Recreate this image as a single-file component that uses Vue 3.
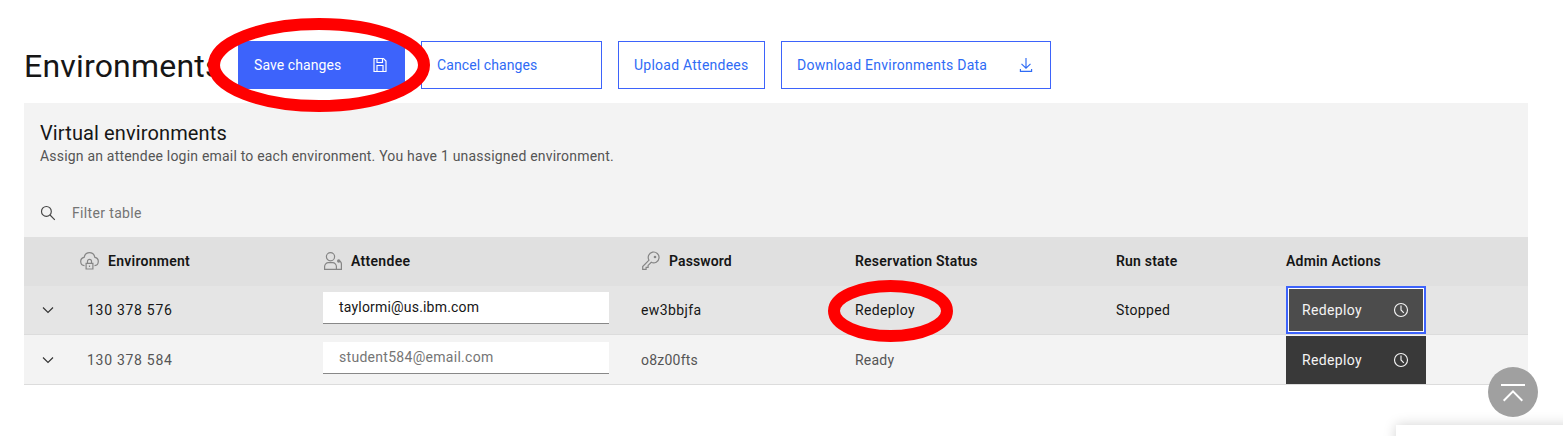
<script setup>
const rows = [
  { id: '130 378 576', email: 'taylormi@us.ibm.com', filled: true, password: 'ew3bbjfa', status: 'Redeploy', run: 'Stopped', selected: true },
  { id: '130 378 584', email: 'student584@email.com', filled: false, password: 'o8z00fts', status: 'Ready', run: '', selected: false },
]
</script>

<template>
  <div class="page">
    <header class="toolbar">
      <h1>Environments</h1>
      <div class="actions">
        <button class="btn primary">
          <span class="t-save">Save changes</span>
          <svg class="ic" width="16" height="16" viewBox="0 0 16 16"><path d="M2 1.5h9.5l2.500 2.500v10.500H2zM5 1.500v4h5.500v-4M5 14.500V8.500h6v6" /></svg>
        </button>
        <button class="btn cancel"><span class="t-cancel">Cancel changes</span></button>
        <button class="btn upload"><span class="t-upload">Upload Attendees</span></button>
        <button class="btn download">
          <span class="t-download">Download Environments Data</span>
          <svg class="ic" width="16" height="16" viewBox="0 0 16 16"><path d="M8 1v10M3.500 6.800L8 11.200l4.500-4.400M2.400 12v2.400h11.200V12" /></svg>
        </button>
      </div>
    </header>

    <main class="panel">
      <section class="intro">
        <h2>Virtual environments</h2>
        <p>Assign an attendee login email to each environment. You have 1 unassigned environment.</p>
      </section>
      <div class="filter">
        <svg class="ic" width="16" height="16" viewBox="0 0 16 16"><circle cx="6.400" cy="6.400" r="4.900" /><path d="M10 10l4.800 4.800" /></svg>
        <span>Filter table</span>
      </div>

      <div class="row head">
        <div></div>
        <div class="th">
          <svg class="ic" width="20" height="20" viewBox="0.500 0 20 20">
            <path d="M5 14.700A4.200 4.200 0 0 1 4.600 6.400C5.200 3.500 7.300 1.600 10 1.600S14.800 3.500 15.400 6.400A4.200 4.200 0 0 1 15 14.700" />
            <path d="M6.600 12.400h6.800v5.600H6.600zM8 12.400V10.300a2 2 0 0 1 4 0v2.100M10 14.600v1.400" />
          </svg>
          <span class="t-env">Environment</span>
        </div>
        <div class="th">
          <svg class="ic" width="20" height="20" viewBox="0 0 20 20">
            <circle cx="7.500" cy="5.700" r="4.100" />
            <path d="M1.600 18.300v-2.800a3.800 3.800 0 0 1 3.800-3.800h4.200a3.800 3.800 0 0 1 3.800 3.800v2.800zM13.400 18.300h5v-5.500a3.200 3.200 0 0 0-2.600-3" />
            <circle class="dot" cx="15.700" cy="10" r="1.700" />
          </svg>
          <span class="t-att">Attendee</span>
        </div>
        <div class="th">
          <svg class="ic" width="20" height="20" viewBox="0 0 20 20">
            <path d="M8 9.200L1.700 15.500v2.900h3.400v-2h2v-2l3.200-3.100a5.400 5.400 0 1 0-2.300-2.100z" />
            <circle class="dot" cx="14" cy="6" r="1.300" />
          </svg>
          <span class="t-pass">Password</span>
        </div>
        <div class="th t-res">Reservation Status</div>
        <div class="th t-run">Run state</div>
        <div class="th t-admin">Admin Actions</div>
      </div>

      <div v-for="row in rows" :key="row.id" class="row body" :class="{ selected: row.selected }">
        <div class="chev">
          <svg class="ic" width="16" height="16" viewBox="0 0 16 16"><path d="M3 5.500l5 5 5-5" /></svg>
        </div>
        <div class="id">{{ row.id }}</div>
        <div class="field" :class="{ filled: row.filled }">{{ row.email }}</div>
        <div class="pw">{{ row.password }}</div>
        <div class="status">{{ row.status }}</div>
        <div class="state">{{ row.run }}</div>
        <button class="redeploy">
          <span>Redeploy</span>
          <svg class="ic" width="16" height="16" viewBox="0 0 16 16"><circle cx="8" cy="8" r="6.500" /><path d="M8 3.500V8l2.800 2.900" /></svg>
        </button>
      </div>
    </main>

    <div class="drawer"></div>
    <button class="top" aria-label="Back to top">
      <svg width="50" height="50" viewBox="0 0 50 50"><path d="M13 18h24M15.700 33.700L25 24.400l9.300 9.300" /></svg>
    </button>
    <svg class="marks" width="1563" height="436" viewBox="0 0 1563 436">
      <ellipse cx="319" cy="65" rx="105" ry="41" />
      <ellipse cx="890.500" cy="311" rx="56.500" ry="25" />
    </svg>
  </div>
</template>

<style scoped>
.page {
  position: relative;
  box-sizing: border-box;
  width: 1563px;
  height: 436px;
  padding: 41px 35px 0 24px;
  overflow: hidden;
  background: #fff;
  color: #161616;
  font: 400 14px/18px Roboto, "Liberation Sans", sans-serif;
  letter-spacing: 0.2px;
}
h1, h2, p { margin: 0; font-weight: 400; }
button {
  box-sizing: border-box;
  margin: 0;
  border: 0;
  border-radius: 0;
  font: inherit;
  text-align: left;
  white-space: nowrap;
}
.ic { display: block; flex: none; fill: none; stroke: currentColor; stroke-width: 1.150; }
.dot { fill: currentColor; stroke: none; }

.toolbar { display: flex; height: 62px; }
h1 { width: 214px; font-size: 32px; line-height: 50px; letter-spacing: 0.200px; white-space: nowrap; }
.actions { display: flex; gap: 16px; }
.btn {
  display: flex;
  align-items: center;
  justify-content: space-between;
  height: 48px;
  padding: 0 16px 0 15px;
  border: 1px solid #3d63fb;
  background: #fff;
  color: #2f6bf5;
}
.primary { width: 167px; background: #3d63fb; color: #fff; }
.cancel { width: 181px; }
.upload { width: 147px; }
.download { width: 270px; }
.t-save { letter-spacing: 0.080px; }
.t-cancel { letter-spacing: 0.100px; }
.t-upload { letter-spacing: 0.240px; }
.t-download { letter-spacing: 0.250px; }

.intro { box-sizing: border-box; height: 86px; padding: 17px 16px 0; background: #f3f3f3; }
h2 { font-size: 20px; line-height: 26px; letter-spacing: 0.120px; }
p { margin-top: 1px; color: #555; letter-spacing: 0.200px; }
.filter {
  display: flex;
  align-items: center;
  gap: 16px;
  height: 48px;
  padding-left: 16px;
  background: #f3f3f3;
  color: #444;
}
.filter span { color: #747474; letter-spacing: 0.350px; }

.row {
  display: grid;
  grid-template-columns: 56px 243px 318px 214px 261px 170px 1fr;
  align-items: center;
}
.head { height: 49px; padding-bottom: 1px; box-sizing: border-box; background: #e0e0e0; }
.th { display: flex; align-items: center; gap: 8px; font-weight: 600; }
.th .ic { color: #858585; stroke-width: 1.200; }
.t-env { letter-spacing: 0.260px; }
.t-att { letter-spacing: 0.300px; }
.t-pass { letter-spacing: 0.120px; }
.t-res { letter-spacing: 0.220px; }
.t-run { letter-spacing: 0.200px; }
.t-admin { letter-spacing: 0.200px; }

.body { box-sizing: border-box; height: 50px; border-bottom: 1px solid #dcdcdc; background: #f3f3f3; color: #555; }
.body.selected { height: 49px; background: #e5e5e5; color: #161616; }
.chev { padding-left: 16px; color: #333; }
.id { padding-left: 7px; letter-spacing: 0.710px; }
.field {
  box-sizing: border-box;
  width: 286px;
  height: 32px;
  margin-bottom: 4px;
  padding: 6px 16px;
  border-bottom: 1px solid #888;
  background: #fff;
  color: #757575;
  letter-spacing: 0.290px;
}
.filled { color: #161616; letter-spacing: 0.190px; }
.pw { letter-spacing: 0.220px; }
.selected .pw { letter-spacing: 0.390px; }
.status { letter-spacing: 0.230px; }
.selected .status { letter-spacing: 0.350px; }
.state { letter-spacing: 0.350px; }
.redeploy {
  display: flex;
  align-items: center;
  justify-content: space-between;
  align-self: end;
  width: 140px;
  height: 48px;
  padding: 0 17px 0 16px;
  background: #393939;
  color: #f4f4f4;
  letter-spacing: 0.350px;
}
.selected .redeploy {
  padding: 0 15px 0 14px;
  border: 2px solid #3d63fb;
  background: #4c4c4c;
  box-shadow: inset 0 0 0 1px #fff;
}

.drawer {
  position: absolute;
  left: 1396px;
  top: 425px;
  width: 200px;
  height: 60px;
  background: #fff;
  box-shadow: 0 0 12px rgba(0, 0, 0, 0.180);
}
.top {
  position: absolute;
  left: 1488px;
  top: 367px;
  width: 50px;
  height: 50px;
  padding: 0;
  border-radius: 50%;
  background: #a0a0a0;
}
.top svg { display: block; fill: none; stroke: #fff; stroke-width: 2; }
.marks { position: absolute; left: 0; top: 0; fill: none; stroke: #f00; stroke-width: 12; pointer-events: none; }
</style>
